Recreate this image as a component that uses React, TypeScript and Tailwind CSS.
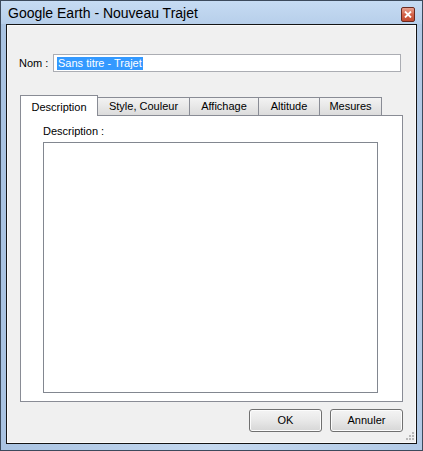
import React from 'react';

const tabs = [
  { label: 'Description', w: 'w-[78px]' },
  { label: 'Style, Couleur', w: 'w-[92px]' },
  { label: 'Affichage', w: 'w-[69px]' },
  { label: 'Altitude', w: 'w-[61px]' },
  { label: 'Mesures', w: 'w-[62px]' },
];

const Button: React.FC<{ label: string }> = ({ label }) => (
  <button className="w-[73px] h-[23px] rounded-[3px] border border-[#707070] bg-gradient-to-b from-[#f4f4f4] via-[#e8e8e8] to-[#d6d6d6] text-[11px] text-black shadow-[inset_0_0_0_1px_#fcfcfc]">
    {label}
  </button>
);

const App: React.FC = () => {
  return (
    <div
      className="w-[423px] h-[451px] flex flex-col border border-[#3c4a5c] bg-gradient-to-r from-[#a9c3e2] via-[#c4d8ef] to-[#b2cae6] text-black"
      style={{ fontFamily: '"Liberation Sans", Arial, sans-serif' }}
    >
      {/* Title bar */}
      <div className="h-[23px] flex items-center justify-between pl-[7px] pr-[7px] bg-gradient-to-b from-[#c6dbf3] to-[#b7cfea]">
        <span className="text-[14px] text-black leading-none mt-[1px]">Google Earth - Nouveau Trajet</span>
        <div className="w-[14px] h-[15px] mt-[4px] rounded-[2px] border border-[#6b2a20] bg-gradient-to-b from-[#e8a291] via-[#d4634a] to-[#c24a31] flex items-center justify-center">
          <svg width="8" height="7" viewBox="0 0 8 7">
            <path d="M1 0.5 L7 6.5 M7 0.5 L1 6.5" stroke="white" strokeWidth="1.8" />
          </svg>
        </div>
      </div>

      {/* Client area */}
      <div className="flex-1 mx-[5px] mb-[6px] border border-[#141414] bg-[#f0f0f0] shadow-[inset_0_0_0_1px_#fafafa] flex flex-col relative">
        {/* Nom row */}
        <div className="flex items-center pt-[29px] pl-[12px]">
          <span className="w-[34px] text-[11px]">Nom :</span>
          <div className="w-[348px] h-[18px] border border-[#abadb3] bg-white flex items-center pl-[3px]">
            <span className="bg-[#3399ff] text-white text-[11px] leading-[13px] px-[1px]">Sans titre - Trajet</span>
          </div>
        </div>

        {/* Tabs */}
        <div className="mt-[23px] ml-[13px] flex items-end relative z-10 h-[21px]">
          {tabs.map((t, i) =>
            i === 0 ? (
              <div
                key={t.label}
                className={`${t.w} h-[21px] border border-b-0 border-[#898c95] bg-white flex items-start justify-center pt-[3px] text-[11px]`}
              >
                {t.label}
              </div>
            ) : (
              <div
                key={t.label}
                className={`${t.w} h-[18px] mb-[1px] border border-l-0 border-b-0 border-[#898c95] bg-gradient-to-b from-[#f3f3f3] to-[#dcdcdc] flex items-center justify-center text-[11px]`}
              >
                {t.label}
              </div>
            ),
          )}
        </div>

        {/* Panel */}
        <div className="ml-[13px] -mt-[1px] w-[383px] h-[287px] border border-[#898c95] bg-white flex flex-col">
          <span className="ml-[22px] mt-[9px] text-[11px] leading-[13px]">Description :</span>
          <div className="ml-[22px] mt-[4px] w-[335px] h-[251px] border border-[#828790] bg-white" />
        </div>

        {/* Buttons */}
        <div className="flex justify-end gap-[8px] mt-[7px] pr-[13px]">
          <Button label="OK" />
          <Button label="Annuler" />
        </div>

        {/* Resize grip */}
        <svg className="absolute right-[2px] bottom-[2px]" width="10" height="10" viewBox="0 0 10 10">
          {[
            [8, 0],
            [5, 3],
            [8, 3],
            [2, 6],
            [5, 6],
            [8, 6],
          ].map(([x, y]) => (
            <rect key={`${x}-${y}`} x={x} y={y + 1} width="2" height="2" fill="#b8b8b8" />
          ))}
        </svg>
      </div>
    </div>
  );
};

export default App;
